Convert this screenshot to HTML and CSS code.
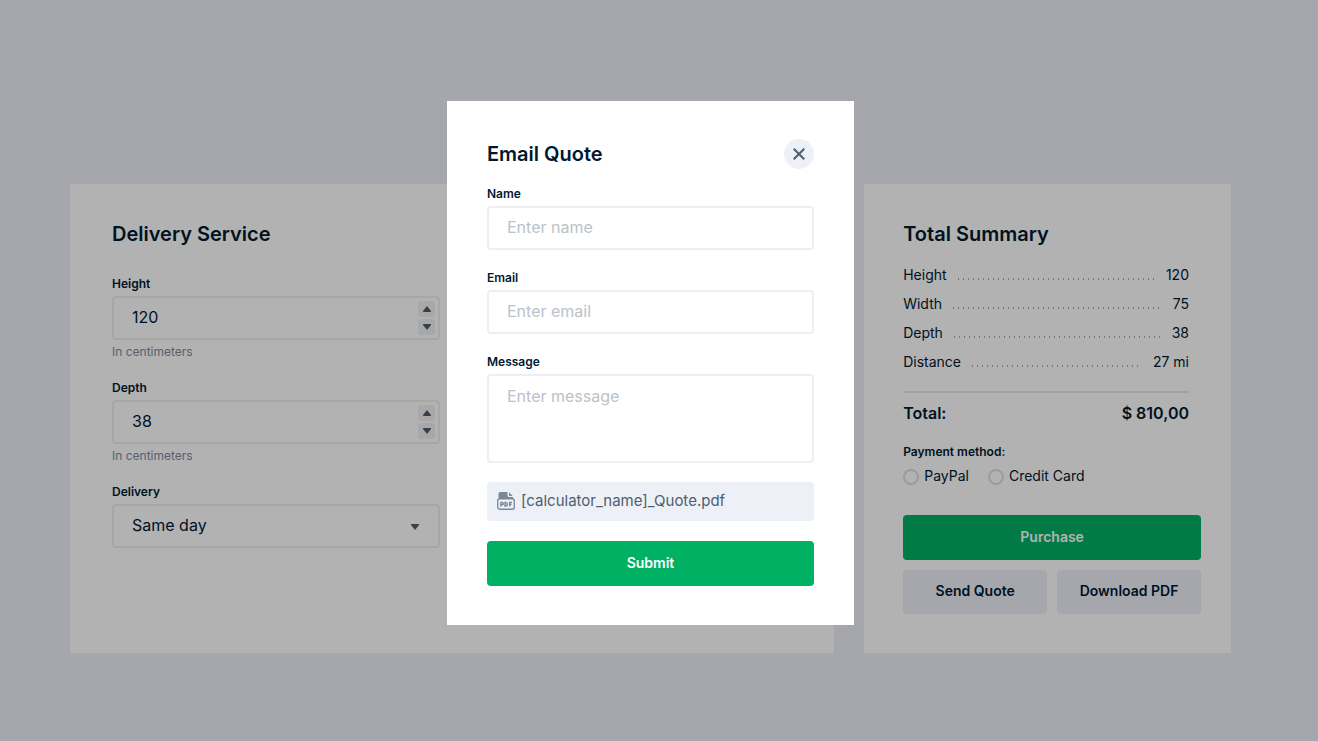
FILE: index.html
```html
<!DOCTYPE html>
<html lang="en">
<head>
<meta charset="utf-8">
<meta name="viewport" content="width=device-width, initial-scale=1">
<title>Delivery Service</title>
<link rel="stylesheet" href="styles.css">
</head>
<body>
<main class="page">
  <section class="card card-form">
    <h2 class="title">Delivery Service</h2>
    <form class="calc">
      <div class="field">
        <label class="label" for="height">Height</label>
        <div class="control">
          <input class="input" id="height" type="number" value="120">
          <div class="stepper">
            <button class="step" type="button" aria-label="Increase height"><svg viewBox="0 0 8 6"><path d="M4 0 8 5V6H0V5z"/></svg></button>
            <button class="step" type="button" aria-label="Decrease height"><svg viewBox="0 0 8 6"><path d="M4 6 8 1V0H0V1z"/></svg></button>
          </div>
        </div>
        <p class="hint">In centimeters</p>
      </div>
      <div class="field">
        <label class="label" for="depth">Depth</label>
        <div class="control">
          <input class="input" id="depth" type="number" value="38">
          <div class="stepper">
            <button class="step" type="button" aria-label="Increase depth"><svg viewBox="0 0 8 6"><path d="M4 0 8 5V6H0V5z"/></svg></button>
            <button class="step" type="button" aria-label="Decrease depth"><svg viewBox="0 0 8 6"><path d="M4 6 8 1V0H0V1z"/></svg></button>
          </div>
        </div>
        <p class="hint">In centimeters</p>
      </div>
      <div class="field">
        <label class="label" for="delivery">Delivery</label>
        <div class="control">
          <select class="input" id="delivery"><option>Same day</option></select>
          <svg class="caret" viewBox="0 0 8 6"><path d="M4 6 8 1V0H0V1z"/></svg>
        </div>
      </div>
    </form>
  </section>

  <section class="card card-summary">
    <h2 class="title">Total Summary</h2>
    <dl class="rows">
      <div class="row"><dt>Height</dt><dd>120</dd></div>
      <div class="row"><dt>Width</dt><dd>75</dd></div>
      <div class="row"><dt>Depth</dt><dd>38</dd></div>
      <div class="row"><dt>Distance</dt><dd>27 mi</dd></div>
    </dl>
    <div class="total"><span>Total:</span><span>$ 810,00</span></div>
    <fieldset class="payment">
      <legend class="label">Payment method:</legend>
      <div class="options">
        <label class="option"><input class="radio" type="radio" name="payment">PayPal</label>
        <label class="option"><input class="radio" type="radio" name="payment">Credit Card</label>
      </div>
    </fieldset>
    <div class="actions">
      <button class="button button-primary" type="button">Purchase</button>
      <button class="button" type="button">Send Quote</button>
      <button class="button" type="button">Download PDF</button>
    </div>
  </section>
</main>

<div class="overlay">
  <form class="modal" role="dialog" aria-modal="true" aria-labelledby="quote-title">
    <header class="modal-head">
      <h2 class="title" id="quote-title">Email Quote</h2>
      <button class="close" type="button" aria-label="Close"><svg viewBox="0 0 12 12"><path d="M.7.7 11.300 11.300M11.300.7.7 11.300"/></svg></button>
    </header>
    <div class="field">
      <label class="label" for="name">Name</label>
      <input class="input" id="name" type="text" placeholder="Enter name">
    </div>
    <div class="field">
      <label class="label" for="email">Email</label>
      <input class="input" id="email" type="email" placeholder="Enter email">
    </div>
    <div class="field">
      <label class="label" for="message">Message</label>
      <textarea class="input input-area" id="message" placeholder="Enter message"></textarea>
    </div>
    <div class="file">
      <svg class="file-icon" viewBox="0 0 18 18">
        <path d="M1.500 6V2Q1.500 0 3.500 0H10.500V3.500Q10.500 5 12 5H16V6z" fill="#7b8794"/>
        <path d="M12 .3 15.700 4H12.700Q12 4 12 3.300z" fill="#7b8794"/>
        <rect x=".75" y="6.750" width="16.500" height="10.500" rx="2" fill="none" stroke="#7b8794" stroke-width="1.300"/>
        <path d="M3.900 14.500V10.400H5.200a1.100 1.100 0 0 1 0 2.300H3.900M8 10.400V14H8.700Q10.300 14 10.300 12.200T8.700 10.400zM12.600 14.500V10.400H15M12.600 12.300H14.600" fill="none" stroke="#7b8794" stroke-width="1.400"/>
      </svg>
      <span>[calculator_name]_Quote.pdf</span>
    </div>
    <button class="button button-primary" type="submit">Submit</button>
  </form>
</div>
</body>
</html>
```
FILE: styles.css
```css
* {
  box-sizing: border-box;
}

body {
  margin: 0;
  min-height: 100vh;
  background: #eef0f8;
  color: #001931;
  font: 14px/20px Inter, "Liberation Sans", sans-serif;
}

button,
input,
select,
textarea {
  font: inherit;
  color: inherit;
}

.page {
  display: grid;
  grid-template-columns: 25fr 12fr;
  gap: 30px;
  padding: 184px 87px 80px 70px;
}

.card {
  background: #fff;
}

.card-form {
  padding: 38px 42px;
}

.card-summary {
  padding: 38px 30px 39px 39px;
}

.title {
  margin: 0;
  font-size: 20px;
  line-height: 24px;
  font-weight: 600;
}

.calc {
  display: grid;
  grid-template-columns: 1fr 1fr;
  gap: 19px 24px;
  margin-top: 30px;
}

.calc .field {
  grid-column: 1;
}

.label {
  display: block;
  margin-bottom: 4px;
  padding: 0;
  font-size: 12px;
  line-height: 16px;
  font-weight: 600;
}

.input {
  display: block;
  width: 100%;
  height: 44px;
  margin: 0;
  padding: 0 18px 2px;
  border: 2px solid #efefef;
  border-radius: 4px;
  background: #fff;
  font-size: 16px;
  line-height: 24px;
  appearance: none;
}

.input::placeholder {
  color: #bbc2c9;
  opacity: 1;
}

.input[type="number"] {
  appearance: textfield;
}

.input::-webkit-inner-spin-button {
  appearance: none;
}

.input-area {
  height: 89px;
  padding-top: 8px;
  resize: none;
}

.control {
  position: relative;
}

.calc .field:not(:last-child) {
  padding-bottom: 1px;
}

.stepper {
  position: absolute;
  top: 5px;
  right: 5px;
  display: grid;
  gap: 2px;
}

.step {
  display: grid;
  place-items: center;
  width: 17px;
  height: 16px;
  padding: 0;
  border: 0;
  border-radius: 3px;
  background: #f1f1f1;
}

.step svg,
.caret {
  width: 8px;
  height: 6px;
  fill: #4d5e6f;
}

.caret {
  position: absolute;
  top: 20px;
  right: 21px;
  pointer-events: none;
}

.hint {
  margin: 4px 0 0;
  color: #80899a;
  font-size: 12px;
  line-height: 16px;
}

.rows {
  margin: 14px 12px 0 0;
  padding-bottom: 15px;
  border-bottom: 2px solid #e8e8e8;
}

.row {
  display: flex;
  align-items: center;
  gap: 11px;
  line-height: 29px;
}

.row::after {
  content: "";
  flex: 1;
  order: 1;
  height: 2px;
  margin-top: 8px;
  background: repeating-linear-gradient(90deg, #a3aab1 0 1px, transparent 1px 5px);
}

.row dd {
  order: 2;
  margin: 0;
}

.total {
  display: flex;
  justify-content: space-between;
  margin: 8px 12px 19px 0;
  font-size: 16px;
  line-height: 24px;
  font-weight: 600;
}

.payment {
  margin: 0;
  padding: 0;
  border: 0;
}

.options {
  display: flex;
  gap: 19px;
  padding-top: 2px;
}

.option {
  display: flex;
  align-items: center;
  gap: 5px;
}

.radio {
  width: 16px;
  height: 16px;
  margin: 2px 0 0;
  border: 2px solid #dedede;
  border-radius: 50%;
  appearance: none;
}

.actions {
  display: grid;
  grid-template-columns: 1fr 1fr;
  gap: 10px;
  margin-top: 29px;
}

.button {
  height: 44px;
  padding: 0 0 2px;
  border: 0;
  border-radius: 4px;
  background: #eef0f8;
  font-weight: 600;
}

.button-primary {
  grid-column: 1 / -1;
  height: 45px;
  background: #00b163;
  color: #fff;
}

.overlay {
  position: fixed;
  inset: 0;
  display: flex;
  justify-content: center;
  align-items: flex-start;
  padding: 101px 87px 0 70px;
  background: rgba(0, 0, 0, 0.3);
}

.modal {
  display: grid;
  width: 407px;
  padding: 38px 40px 39px;
  background: #fff;
}

.modal-head {
  display: flex;
  justify-content: space-between;
  align-items: center;
  margin-bottom: 17px;
}

.modal .field {
  margin-bottom: 20px;
}

.modal .field:nth-of-type(3) {
  margin-bottom: 19px;
}

.close {
  display: grid;
  place-items: center;
  width: 30px;
  height: 30px;
  padding: 0;
  border: 0;
  border-radius: 50%;
  background: #eef0f8;
}

.close svg {
  width: 12px;
  height: 12px;
  fill: none;
  stroke: #4d5e6f;
  stroke-width: 2;
}

.file {
  display: flex;
  align-items: center;
  gap: 6px;
  height: 39px;
  margin-bottom: 20px;
  padding: 0 10px 2px;
  border-radius: 4px;
  background: #eef0f8;
  color: #4d5e6f;
  font-size: 15px;
}

.file-icon {
  width: 18px;
  height: 18px;
}
```
